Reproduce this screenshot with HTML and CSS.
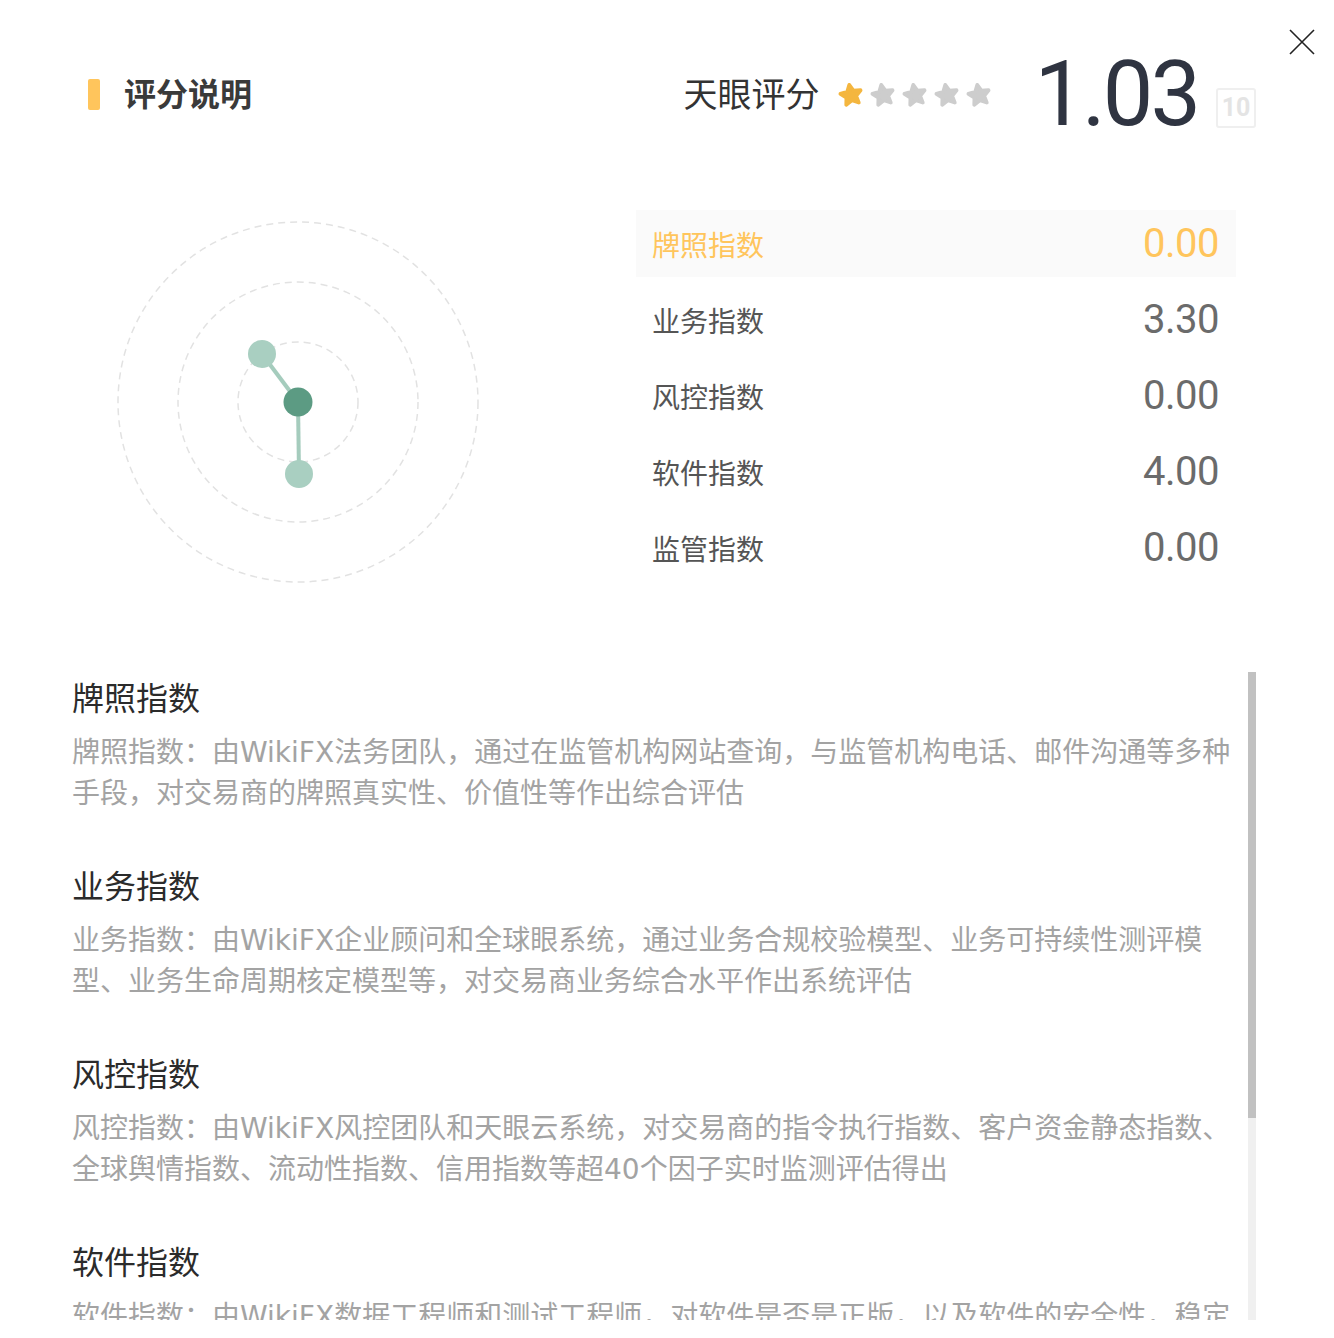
FILE: index.html
```html
<!DOCTYPE html>
<html lang="zh-CN">
<head>
  <meta charset="UTF-8" />
  <meta name="viewport" content="width=device-width, initial-scale=1.0"/>
  <title>评分说明</title>
  <link rel="stylesheet" href="styles.css">
</head>
<body>
  <div class="dialog">
    <button class="close" aria-label="关闭">
      <svg width="26" height="26" viewBox="0 0 26 26"><path d="M1 1 L25 25 M25 1 L1 25" stroke="#222" stroke-width="1.6" fill="none"/></svg>
    </button>

    <div class="header">
      <h2 class="title">评分说明</h2>
      <div class="score">
        <span class="score-label">天眼评分</span>
        <div class="stars">
          <svg class="star on" viewBox="0 0 26 26"><polygon points="13,3.5 15.9,9.4 22.5,10.2 17.6,14.6 18.9,21.2 13,17.9 7.1,21.2 8.4,14.6 3.5,10.2 10.1,9.4"/></svg>
          <svg class="star" viewBox="0 0 26 26"><polygon points="13,3.5 15.9,9.4 22.5,10.2 17.6,14.6 18.9,21.2 13,17.9 7.1,21.2 8.4,14.6 3.5,10.2 10.1,9.4"/></svg>
          <svg class="star" viewBox="0 0 26 26"><polygon points="13,3.5 15.9,9.4 22.5,10.2 17.6,14.6 18.9,21.2 13,17.9 7.1,21.2 8.4,14.6 3.5,10.2 10.1,9.4"/></svg>
          <svg class="star" viewBox="0 0 26 26"><polygon points="13,3.5 15.9,9.4 22.5,10.2 17.6,14.6 18.9,21.2 13,17.9 7.1,21.2 8.4,14.6 3.5,10.2 10.1,9.4"/></svg>
          <svg class="star" viewBox="0 0 26 26"><polygon points="13,3.5 15.9,9.4 22.5,10.2 17.6,14.6 18.9,21.2 13,17.9 7.1,21.2 8.4,14.6 3.5,10.2 10.1,9.4"/></svg>
        </div>
        <span class="score-num">1.03</span>
        <span class="score-max">10</span>
      </div>
    </div>

    <div class="overview">
      <svg class="radar" width="400" height="400" viewBox="0 0 400 400">
        <g fill="none" stroke="#e2e2e2" stroke-width="1.5" stroke-dasharray="7 5">
          <circle cx="200" cy="200" r="180"/>
          <circle cx="200" cy="200" r="120"/>
          <circle cx="200" cy="200" r="60"/>
        </g>
        <g stroke="#8fc0ad" stroke-width="4" opacity="0.8">
          <line x1="200" y1="200" x2="164" y2="152"/>
          <line x1="200" y1="200" x2="201" y2="272"/>
        </g>
        <circle cx="164" cy="152" r="14" fill="#a9cfc1"/>
        <circle cx="201" cy="272" r="14" fill="#a9cfc1"/>
        <circle cx="200" cy="200" r="14.5" fill="#5c9b83"/>
      </svg>

      <ul class="index-table">
        <li class="row active"><span>牌照指数</span><b>0.00</b></li>
        <li class="row"><span>业务指数</span><b>3.30</b></li>
        <li class="row"><span>风控指数</span><b>0.00</b></li>
        <li class="row"><span>软件指数</span><b>4.00</b></li>
        <li class="row"><span>监管指数</span><b>0.00</b></li>
      </ul>
    </div>

    <div class="desc-wrap">
      <div class="desc-list">
        <div class="desc">
          <h3>牌照指数</h3>
          <p>牌照指数：由WikiFX法务团队，通过在监管机构网站查询，与监管机构电话、邮件沟通等多种手段，对交易商的牌照真实性、价值性等作出综合评估</p>
        </div>
        <div class="desc">
          <h3>业务指数</h3>
          <p>业务指数：由WikiFX企业顾问和全球眼系统，通过业务合规校验模型、业务可持续性测评模型、业务生命周期核定模型等，对交易商业务综合水平作出系统评估</p>
        </div>
        <div class="desc">
          <h3>风控指数</h3>
          <p>风控指数：由WikiFX风控团队和天眼云系统，对交易商的指令执行指数、客户资金静态指数、全球舆情指数、流动性指数、信用指数等超40个因子实时监测评估得出</p>
        </div>
        <div class="desc">
          <h3>软件指数</h3>
          <p>软件指数：由WikiFX数据工程师和测试工程师，对软件是否是正版，以及软件的安全性，稳定性、流畅性等作出综合评估</p>
        </div>
        <div class="desc">
          <h3>监管指数</h3>
          <p>监管指数：由WikiFX监管团队，对交易商所持牌照的监管机构的监管力度、监管范围等作出综合评估</p>
        </div>
      </div>
      <div class="scrollbar"><div class="thumb"></div></div>
    </div>
  </div>
</body>
</html>
```

FILE: styles.css
```css
:root {
  --yellow: #ffc55c;
  --text-dark: #333;
  --text-mid: #555;
  --text-light: #a3a3a3;
  --num: Roboto, "Liberation Sans", sans-serif;
}

* {
  box-sizing: border-box;
  margin: 0;
  padding: 0;
}

body {
  background: #fff;
  font-family: "Noto Sans CJK SC", "Noto Sans", sans-serif;
  color: var(--text-dark);
}

.dialog {
  position: relative;
  width: 1334px;
  height: 1338px;
  padding-top: 50px;
}

.close {
  position: absolute;
  top: 29px;
  right: 19px;
  width: 26px;
  height: 26px;
  border: none;
  background: none;
  cursor: pointer;
}

.close svg {
  display: block;
}

/* header */
.header {
  display: flex;
  justify-content: space-between;
  align-items: center;
  height: 90px;
  padding: 0 78px 0 88px;
}

.title {
  display: flex;
  align-items: center;
  gap: 24px;
  margin-bottom: 6px;
  font-size: 32px;
  font-weight: bold;
  color: #3a3a3a;
  line-height: 1;
}

.title::before {
  content: "";
  width: 12px;
  height: 31px;
  margin-top: 4px;
  border-radius: 2px;
  background: var(--yellow);
}

.score {
  display: flex;
  align-items: center;
  height: 90px;
}

.score-label {
  margin-bottom: 4px;
  font-size: 34px;
  color: #333;
  line-height: 1;
}

.stars {
  display: flex;
  gap: 4px;
  margin-left: 17px;
}

.star {
  width: 28px;
  height: 28px;
  transform: rotate(-10deg);
}

.star polygon {
  fill: #cdcdcd;
  stroke: #cdcdcd;
  stroke-width: 3.5;
  stroke-linejoin: round;
}

.star.on polygon {
  fill: #f4b63f;
  stroke: #f4b63f;
}

.score-num {
  margin-left: 42px;
  font-family: var(--num);
  font-size: 90px;
  line-height: 1;
  letter-spacing: -3px;
  color: #2f3441;
}

.score-max {
  align-self: flex-end;
  margin: 0 0 12px 18px;
  width: 40px;
  height: 40px;
  border: 2px solid #efefef;
  border-radius: 3px;
  font-family: var(--num);
  font-size: 25px;
  font-weight: bold;
  line-height: 36px;
  text-align: center;
  color: #e4e4e4;
}

/* chart + table */
.overview {
  display: flex;
  margin-top: 62px;
  padding-left: 98px;
}

.radar {
  display: block;
  flex: none;
}

.index-table {
  list-style: none;
  width: 600px;
  margin: 8px 0 0 138px;
  display: flex;
  flex-direction: column;
  gap: 9px;
}

.row {
  display: flex;
  justify-content: space-between;
  align-items: center;
  height: 67px;
  padding: 0 17px 0 16px;
  font-size: 28px;
  color: var(--text-mid);
}

.row b {
  font-family: var(--num);
  font-weight: normal;
  font-size: 40px;
  letter-spacing: -0.5px;
  color: #6b6b6b;
}

.row.active {
  background: #fafafa;
  color: var(--yellow);
}

.row.active b {
  color: var(--yellow);
}

/* descriptions */
.desc-wrap {
  display: flex;
  height: 648px;
  margin: 70px 0 0 72px;
}

.desc-list {
  width: 1176px;
  overflow: hidden;
}

.scrollbar {
  width: 8px;
  background: #f0f0f0;
}

.thumb {
  height: 446px;
  background: #c1c1c1;
}

.desc {
  margin-bottom: 46px;
}

.desc h3 {
  font-size: 32px;
  font-weight: normal;
  line-height: 48px;
  color: #2b2b2b;
}

.desc p {
  margin-top: 12px;
  font-family: "DejaVu Sans", "Noto Sans CJK SC", sans-serif;
  font-size: 28px;
  line-height: 41px;
  color: var(--text-light);
}
```
